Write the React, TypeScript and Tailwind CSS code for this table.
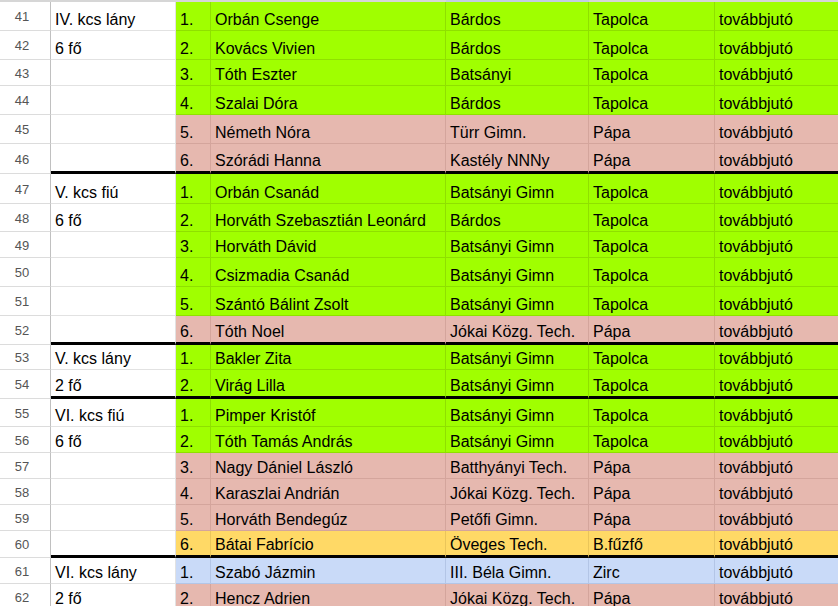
type Tone = "green" | "pink" | "yellow" | "blue";

type Row = {
  n: number;
  group: string;
  place: string;
  name: string;
  school: string;
  city: string;
  tone: Tone;
  h: number;
  thick?: boolean;
};

const rows: Row[] = [
  { n: 41, group: "IV. kcs lány", place: "1.", name: "Orbán Csenge", school: "Bárdos", city: "Tapolca", tone: "green", h: 29 },
  { n: 42, group: "6 fő", place: "2.", name: "Kovács Vivien", school: "Bárdos", city: "Tapolca", tone: "green", h: 29 },
  { n: 43, group: "", place: "3.", name: "Tóth Eszter", school: "Batsányi", city: "Tapolca", tone: "green", h: 26 },
  { n: 44, group: "", place: "4.", name: "Szalai Dóra", school: "Bárdos", city: "Tapolca", tone: "green", h: 29 },
  { n: 45, group: "", place: "5.", name: "Németh Nóra", school: "Türr Gimn.", city: "Pápa", tone: "pink", h: 29 },
  { n: 46, group: "", place: "6.", name: "Szórádi Hanna", school: "Kastély NNNy", city: "Pápa", tone: "pink", h: 27, thick: true },
  { n: 47, group: "V. kcs fiú", place: "1.", name: "Orbán Csanád", school: "Batsányi Gimn", city: "Tapolca", tone: "green", h: 30 },
  { n: 48, group: "6 fő", place: "2.", name: "Horváth Szebasztián Leonárd", school: "Bárdos", city: "Tapolca", tone: "green", h: 28 },
  { n: 49, group: "", place: "3.", name: "Horváth Dávid", school: "Batsányi Gimn", city: "Tapolca", tone: "green", h: 26 },
  { n: 50, group: "", place: "4.", name: "Csizmadia Csanád", school: "Batsányi Gimn", city: "Tapolca", tone: "green", h: 29 },
  { n: 51, group: "", place: "5.", name: "Szántó Bálint Zsolt", school: "Batsányi Gimn", city: "Tapolca", tone: "green", h: 29 },
  { n: 52, group: "", place: "6.", name: "Tóth Noel", school: "Jókai Közg. Tech.", city: "Pápa", tone: "pink", h: 26, thick: true },
  { n: 53, group: "V. kcs lány", place: "1.", name: "Bakler Zita", school: "Batsányi Gimn", city: "Tapolca", tone: "green", h: 25 },
  { n: 54, group: "2 fő", place: "2.", name: "Virág Lilla", school: "Batsányi Gimn", city: "Tapolca", tone: "green", h: 26, thick: true },
  { n: 55, group: "VI. kcs fiú", place: "1.", name: "Pimper Kristóf", school: "Batsányi Gimn", city: "Tapolca", tone: "green", h: 28 },
  { n: 56, group: "6 fő", place: "2.", name: "Tóth Tamás András", school: "Batsányi Gimn", city: "Tapolca", tone: "green", h: 26 },
  { n: 57, group: "", place: "3.", name: "Nagy Dániel László", school: "Batthyányi Tech.", city: "Pápa", tone: "pink", h: 26 },
  { n: 58, group: "", place: "4.", name: "Karaszlai Andrián", school: "Jókai Közg. Tech.", city: "Pápa", tone: "pink", h: 26 },
  { n: 59, group: "", place: "5.", name: "Horváth Bendegúz", school: "Petőfi Gimn.", city: "Pápa", tone: "pink", h: 26 },
  { n: 60, group: "", place: "6.", name: "Bátai Fabrício", school: "Öveges Tech.", city: "B.fűzfő", tone: "yellow", h: 24, thick: true },
  { n: 61, group: "VI. kcs lány", place: "1.", name: "Szabó Jázmin", school: "III. Béla Gimn.", city: "Zirc", tone: "blue", h: 26 },
  { n: 62, group: "2 fő", place: "2.", name: "Hencz Adrien", school: "Jókai Közg. Tech.", city: "Pápa", tone: "pink", h: 26 },
];

// fill + gridline colour per tone
const toneCls: Record<Tone, string> = {
  green: "bg-[#a0ff00] border-[#8fe000]",
  pink: "bg-[#e6b8af] border-[#d4a59c]",
  yellow: "bg-[#ffd966] border-[#eac55a]",
  blue: "bg-[#c9daf8] border-[#b3c5e6]",
};

function Cell({
  w,
  cls,
  thick,
  children,
}: {
  w: string;
  cls: string;
  thick?: boolean;
  children?: React.ReactNode;
}) {
  return (
    <div
      className={`flex shrink-0 items-end border-r pb-[1px] pl-[4px] whitespace-nowrap overflow-hidden ${w} ${cls} ${
        thick ? "border-b-[3px] border-b-black" : "border-b"
      }`}
    >
      <span className="leading-[18px]">{children}</span>
    </div>
  );
}

function SheetRow({ r }: { r: Row }) {
  const tone = toneCls[r.tone];
  const total = r.h + (r.thick ? 3 : 0);
  return (
    <div className="flex" style={{ height: total }}>
      <div className="flex w-[51px] shrink-0 items-center justify-center border-r border-b border-r-[#c0c0c0] border-b-[#dcdcdc] bg-white pt-[2px] pr-[6px] text-[13px] text-[#555]">
        {r.n}
      </div>
      <Cell w="w-[125px]" cls="bg-white border-[#e2e2e2]" thick={r.thick}>
        {r.group}
      </Cell>
      <Cell w="w-[35px]" cls={tone} thick={r.thick}>
        {r.place}
      </Cell>
      <Cell w="w-[235px]" cls={tone} thick={r.thick}>
        {r.name}
      </Cell>
      <Cell w="w-[143px]" cls={`${tone} pl-[3px]`} thick={r.thick}>
        {r.school}
      </Cell>
      <Cell w="w-[126px]" cls={`${tone} pl-[3px]`} thick={r.thick}>
        {r.city}
      </Cell>
      <Cell w="w-[140px]" cls={`${tone} pl-[3px]`} thick={r.thick}>
        továbbjutó
      </Cell>
    </div>
  );
}

export default function App() {
  return (
    <main className="h-[606px] w-[838px] overflow-hidden bg-white font-['Liberation_Sans',Arial,sans-serif] text-[16px] text-black">
      <div className="flex h-[2px]">
        <div className="w-[446px] bg-[#d6d6d6]" />
        <div className="w-[143px] bg-[#c3cce4]" />
        <div className="flex-1 bg-[#d6d6d6]" />
      </div>
      {rows.map((r) => (
        <SheetRow key={r.n} r={r} />
      ))}
    </main>
  );
}
